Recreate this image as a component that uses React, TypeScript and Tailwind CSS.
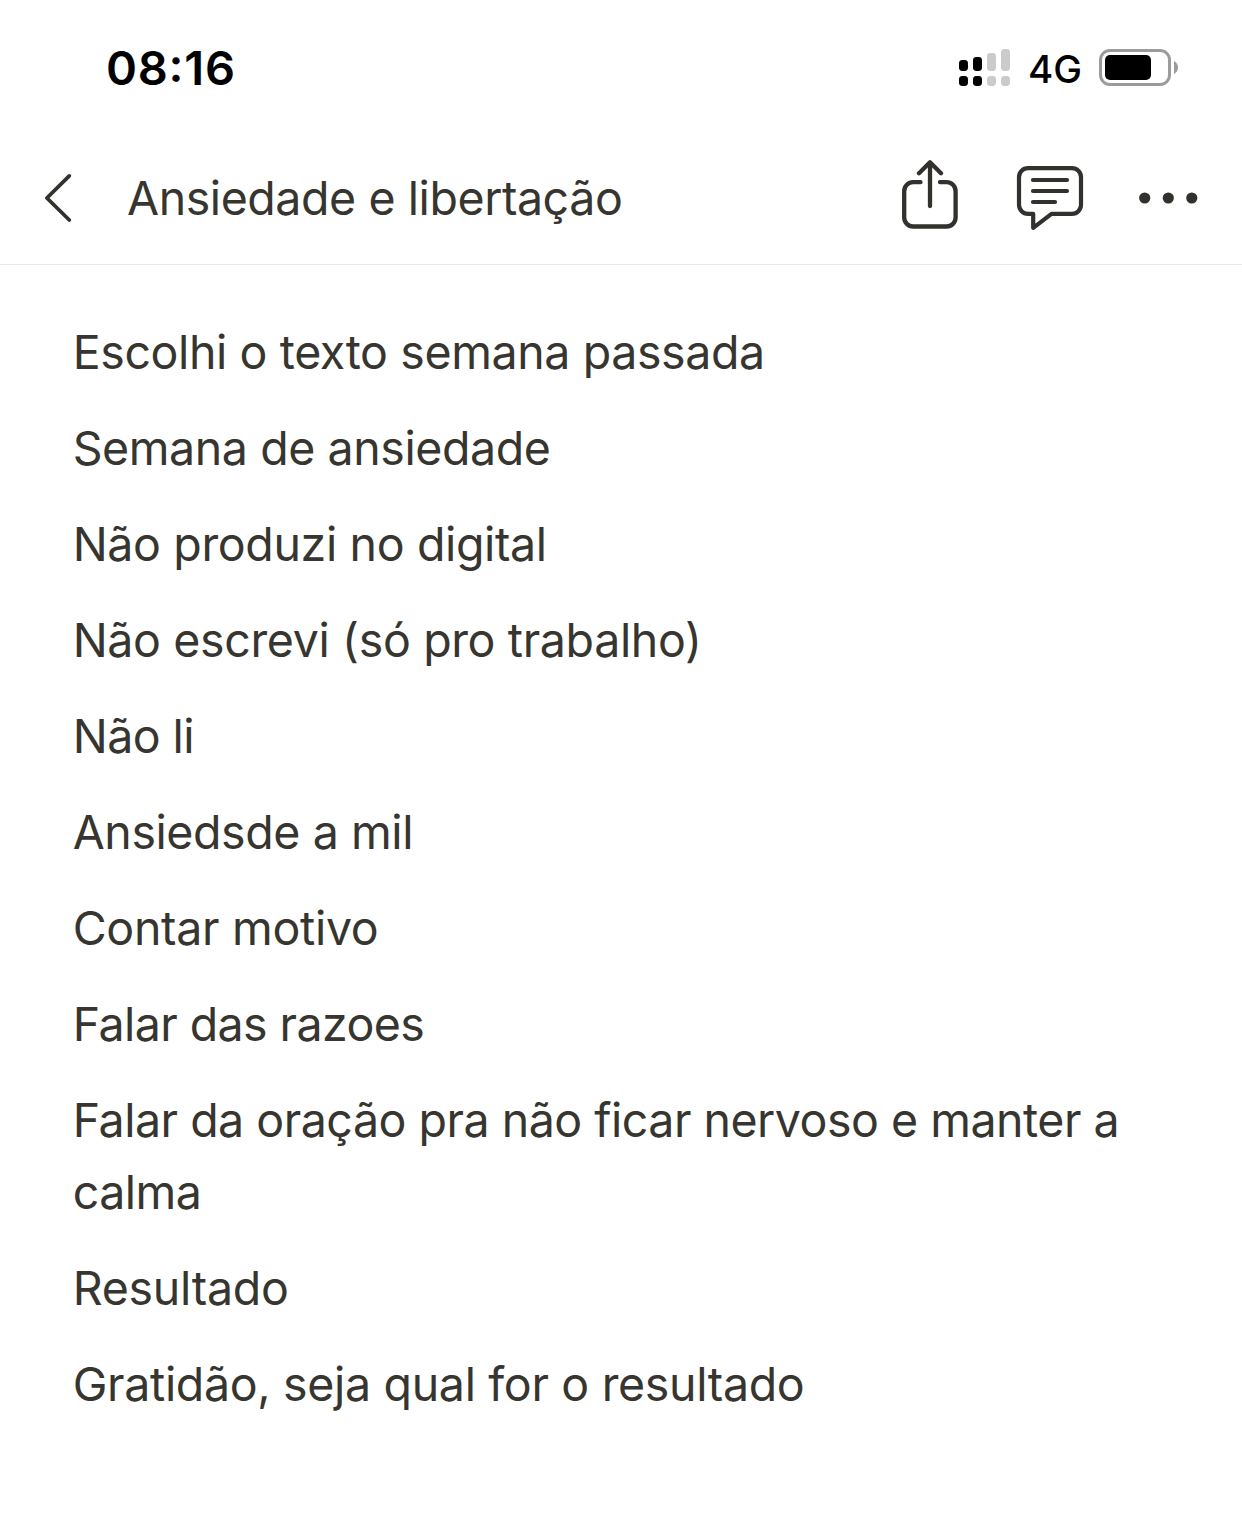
import React from "react";

type Line = { text: string; tracking: string };

const lines: Line[] = [
  { text: "Escolhi o texto semana passada", tracking: "tracking-[-0.39px]" },
  { text: "Semana de ansiedade", tracking: "tracking-[-0.42px]" },
  { text: "Não produzi no digital", tracking: "tracking-[-0.36px]" },
  { text: "Não escrevi (só pro trabalho)", tracking: "tracking-[-0.36px]" },
  { text: "Não li", tracking: "tracking-[-0.55px]" },
  { text: "Ansiedsde a mil", tracking: "tracking-[-0.42px]" },
  { text: "Contar motivo", tracking: "tracking-[-0.3px]" },
  { text: "Falar das razoes", tracking: "tracking-[-0.57px]" },
  {
    text: "Falar da oração pra não ficar nervoso e manter a calma",
    tracking: "tracking-[-0.49px]",
  },
  { text: "Resultado", tracking: "tracking-[-0.25px]" },
  { text: "Gratidão, seja qual for o resultado", tracking: "tracking-[-0.33px]" },
];

function Signal() {
  return (
    <svg className="h-[37px] w-[51px]" viewBox="0 0 51 37">
      <g fill="#000">
        <rect x="0" y="11" width="9" height="11" rx="3.4" />
        <rect x="14" y="8" width="9" height="14" rx="3.4" />
        <rect x="0" y="27" width="9" height="10" rx="3.4" />
        <rect x="14" y="27" width="9" height="10" rx="3.4" />
      </g>
      <g fill="#cbcbcb">
        <rect x="28" y="4" width="9" height="18" rx="3.4" />
        <rect x="42" y="0" width="9" height="22" rx="3.4" />
        <rect x="28" y="27" width="9" height="10" rx="3.4" />
        <rect x="42" y="27" width="9" height="10" rx="3.4" />
      </g>
    </svg>
  );
}

function Battery() {
  return (
    <svg className="h-[37px] w-[79px]" viewBox="0 0 79 37">
      <rect x="1.5" y="1.5" width="69" height="34" rx="9.5" fill="none" stroke="#9b9b9b" strokeWidth="3" />
      <rect x="6" y="6" width="46" height="25" rx="5" fill="#000" />
      <path d="M75 12 C77.5 13.2 79 15.7 79 18.5 S77.5 23.8 75 25 Z" fill="#9b9b9b" />
    </svg>
  );
}

function StatusBar() {
  return (
    <div className="flex h-[132px] items-start justify-between pr-16 pl-[106px] text-black">
      <span className="mt-[41px] text-[47px] leading-[48px] font-semibold tracking-[0.75px]">
        08<span className="align-[3px]">:</span>16
      </span>
      <div className="mt-[49px] flex items-start">
        <Signal />
        <span className="mt-[2px] ml-[18px] w-[54px] text-[38.5px] leading-[37px] font-[450] whitespace-nowrap">
          4G
        </span>
        <div className="ml-[17px]">
          <Battery />
        </div>
      </div>
    </div>
  );
}

function Header() {
  return (
    <header className="flex h-[133px] items-center border-b border-[#e9e9e9] pl-[43px]">
      <button aria-label="Voltar">
        <svg className="h-[52px] w-[30px]" viewBox="0 0 30 52" fill="none" stroke="#32312d" strokeWidth="3.8" strokeLinecap="round" strokeLinejoin="round">
          <path d="M26.3 3.9 3.9 26 26.3 48" />
        </svg>
      </button>
      <h1 className="ml-[54px] flex-1 text-[46.5px] leading-[72px] whitespace-nowrap tracking-[-0.43px]">
        Ansiedade e libertação
      </h1>
      <button aria-label="Compartilhar">
        <svg className="h-[76px] w-[60px]" viewBox="900 160 60 76" fill="none" stroke="#32312d" strokeWidth="4.3" strokeLinecap="round" strokeLinejoin="round">
          <path d="M920.5 182.2h-7.3a9 9 0 0 0-9 9v26.3a9 9 0 0 0 9 9h33.4a9 9 0 0 0 9-9v-26.3a9 9 0 0 0-9-9h-6.6" />
          <path d="M930 206V162.5M919 173.3l11-11 11 11" />
        </svg>
      </button>
      <button aria-label="Comentários" className="ml-[55px]">
        <svg className="h-[76px] w-[70px]" viewBox="1015 160 70 76" fill="none" stroke="#32312d" strokeWidth="4.2" strokeLinecap="round" strokeLinejoin="round">
          <path d="M1033.2 227.8v-14h-5.2a9 9 0 0 1-9-9v-27.7a9 9 0 0 1 9-9h44a9 9 0 0 1 9 9v27.7a9 9 0 0 1-9 9h-20.5z" />
          <path d="M1033 180h34M1033 191h34M1033 202h22" />
        </svg>
      </button>
      <button aria-label="Mais opções" className="mr-[44px] ml-[53px]">
        <svg className="h-3 w-[60px]" viewBox="0 0 60 12" fill="#32312d">
          <circle cx="6.7" cy="6" r="5.6" />
          <circle cx="30.3" cy="6" r="5.6" />
          <circle cx="53.8" cy="6" r="5.6" />
        </svg>
      </button>
    </header>
  );
}

export default function App() {
  return (
    <div className="min-h-[1525px] w-full bg-white font-['Inter',sans-serif] text-[#37352f]">
      <StatusBar />
      <Header />
      <main className="flex flex-col gap-6 pt-[51px] pr-[72px] pl-[72.7px] text-[46.5px] leading-[72px]">
        {lines.map((line) => (
          <p key={line.text} className={line.tracking}>
            {line.text}
          </p>
        ))}
      </main>
    </div>
  );
}
